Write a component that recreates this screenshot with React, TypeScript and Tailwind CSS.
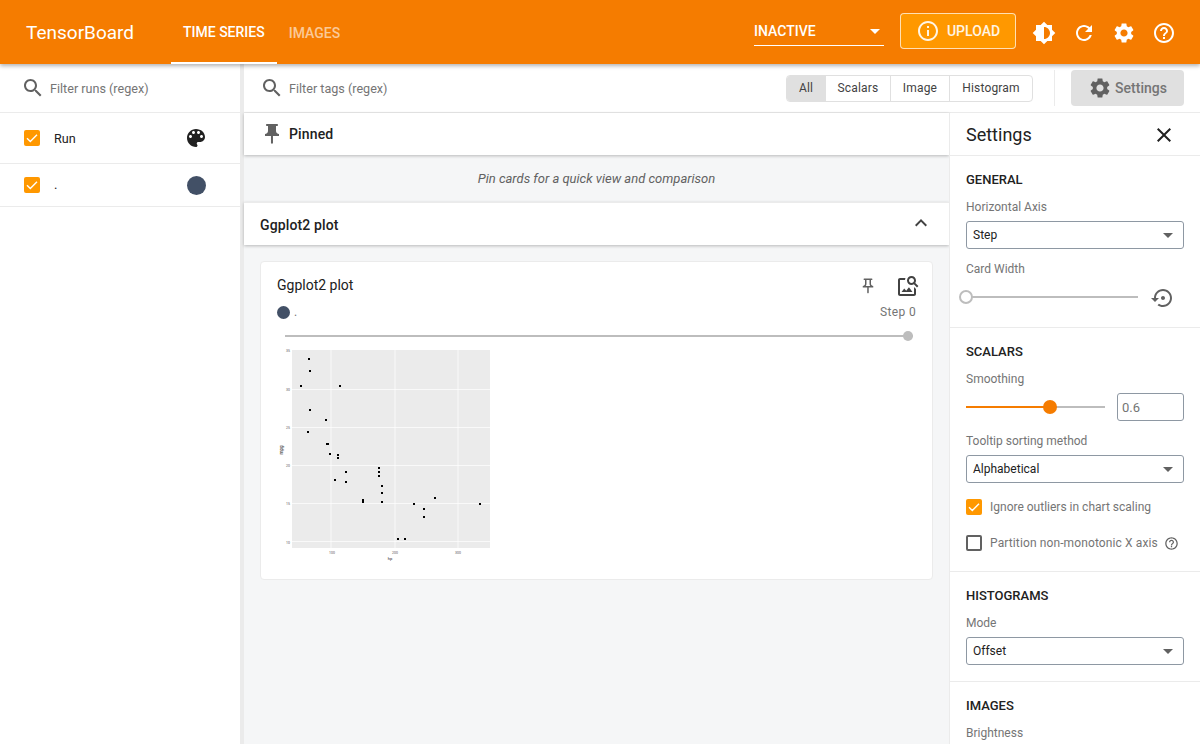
import React from 'react'

/* Material icon paths */
const icons = {
  search: 'M15.5 14h-.79l-.28-.27C15.41 12.59 16 11.11 16 9.5 16 5.91 13.09 3 9.5 3S3 5.91 3 9.5 5.91 16 9.5 16c1.61 0 3.09-.59 4.23-1.57l.27.28v.79l5 4.99L20.49 19l-4.99-5zm-6 0C7.01 14 5 11.99 5 9.5S7.01 5 9.5 5 14 7.01 14 9.5 11.99 14 9.5 14z',
  palette: 'M12 3c-4.97 0-9 4.03-9 9s4.03 9 9 9c.83 0 1.5-.67 1.5-1.5 0-.39-.15-.74-.39-1.01-.23-.26-.38-.61-.38-.99 0-.83.67-1.5 1.5-1.5H16c2.76 0 5-2.24 5-5 0-4.42-4.03-8-9-8zm-5.5 9c-.83 0-1.5-.67-1.5-1.5S5.67 9 6.5 9 8 9.67 8 10.5 7.33 12 6.5 12zm3-4C8.67 8 8 7.33 8 6.5S8.67 5 9.5 5s1.5.67 1.5 1.5S10.33 8 9.5 8zm5 0c-.83 0-1.5-.67-1.5-1.5S13.67 5 14.5 5s1.5.67 1.5 1.5S15.33 8 14.5 8zm3 4c-.83 0-1.5-.67-1.5-1.5S16.67 9 17.5 9s1.5.67 1.5 1.5-.67 1.5-1.5 1.5z',
  brightness: 'M20 15.31L23.31 12 20 8.69V4h-4.69L12 .69 8.69 4H4v4.69L.69 12 4 15.31V20h4.69L12 23.31 15.31 20H20v-4.69zM12 18V6c3.31 0 6 2.69 6 6s-2.69 6-6 6z',
  refresh: 'M17.65 6.35C16.2 4.9 14.21 4 12 4c-4.42 0-7.99 3.58-7.99 8s3.57 8 7.99 8c3.73 0 6.84-2.55 7.73-6h-2.08c-.82 2.33-3.04 4-5.65 4-3.31 0-6-2.69-6-6s2.69-6 6-6c1.66 0 3.14.69 4.22 1.78L13 11h7V4l-2.35 2.35z',
  settings: 'M19.14 12.94c.04-.3.06-.61.06-.94 0-.32-.02-.64-.07-.94l2.03-1.58c.18-.14.23-.41.12-.61l-1.92-3.32c-.12-.22-.37-.29-.59-.22l-2.39.96c-.5-.38-1.03-.7-1.62-.94l-.36-2.54c-.04-.24-.24-.41-.48-.41h-3.84c-.24 0-.43.17-.47.41l-.36 2.54c-.59.24-1.13.57-1.62.94l-2.39-.96c-.22-.08-.47 0-.59.22L2.74 8.87c-.12.21-.08.47.12.61l2.03 1.58c-.05.3-.09.63-.09.94s.02.64.07.94l-2.03 1.58c-.18.14-.23.41-.12.61l1.92 3.32c.12.22.37.29.59.22l2.39-.96c.5.38 1.03.7 1.62.94l.36 2.54c.05.24.24.41.48.41h3.84c.24 0 .44-.17.47-.41l.36-2.54c.59-.24 1.13-.56 1.62-.94l2.39.96c.22.08.47 0 .59-.22l1.92-3.32c.12-.22.07-.47-.12-.61l-2.01-1.58zM12 15.6c-1.98 0-3.6-1.62-3.6-3.6s1.62-3.6 3.6-3.6 3.6 1.62 3.6 3.6-1.62 3.6-3.6 3.6z',
  help: 'M11 18h2v-2h-2v2zm1-16C6.48 2 2 6.48 2 12s4.48 10 10 10 10-4.48 10-10S17.52 2 12 2zm0 18c-4.41 0-8-3.59-8-8s3.59-8 8-8 8 3.59 8 8-3.59 8-8 8zm0-14c-2.21 0-4 1.79-4 4h2c0-1.1.9-2 2-2s2 .9 2 2c0 2-3 1.75-3 5h2c0-2.25 3-2.5 3-5 0-2.21-1.79-4-4-4z',
  info: 'M11 7h2v2h-2zm0 4h2v6h-2zm1-9C6.48 2 2 6.48 2 12s4.48 10 10 10 10-4.48 10-10S17.52 2 12 2zm0 18c-4.41 0-8-3.59-8-8s3.59-8 8-8 8 3.59 8 8-3.59 8-8 8z',
  pin: 'M16 9V4h1c.55 0 1-.45 1-1s-.45-1-1-1H7c-.55 0-1 .45-1 1s.45 1 1 1h1v5c0 1.66-1.34 3-3 3v2h5.97v7l1 1 1-1v-7H19v-2c-1.66 0-3-1.34-3-3z',
  pinOutline: 'M14 4v5c0 1.12.37 2.16 1 3H9c.65-.86 1-1.9 1-3V4h4m3-2H7c-.55 0-1 .45-1 1s.45 1 1 1h1v5c0 1.66-1.34 3-3 3v2h5.97v7l1 1 1-1v-7H19v-2c-1.66 0-3-1.34-3-3V4h1c.55 0 1-.45 1-1s-.45-1-1-1z',
  close: 'M19 6.41L17.59 5 12 10.59 6.41 5 5 6.41 10.59 12 5 17.59 6.41 19 12 13.41 17.59 19 19 17.59 13.41 12z',
  expandLess: 'M12 8l-6 6 1.41 1.41L12 10.83l4.59 4.58L18 14z',
  restore: 'M14 12c0-1.1-.9-2-2-2s-2 .9-2 2 .9 2 2 2 2-.9 2-2zm-2-9c-4.97 0-9 4.03-9 9H0l4 4 4-4H5c0-3.87 3.13-7 7-7s7 3.13 7 7-3.13 7-7 7c-1.51 0-2.91-.49-4.06-1.3l-1.42 1.44C8.04 20.3 9.94 21 12 21c4.97 0 9-4.03 9-9s-4.03-9-9-9z',
  imageSearch: 'M18 13v7H4V6h5.02c.05-.71.22-1.38.48-2H4c-1.1 0-2 .9-2 2v14c0 1.1.9 2 2 2h14c1.1 0 2-.9 2-2v-5l-2-2zm-1.5 5h-11l2.75-3.53 1.96 2.36 2.75-3.54L16.5 18zm2.8-9.11c.44-.7.7-1.51.7-2.39C20 4.01 17.99 2 15.5 2S11 4.01 11 6.5s2.01 4.5 4.49 4.5c.88 0 1.7-.26 2.39-.7L21 13.42 22.42 12 19.3 8.89zM15.5 9C14.12 9 13 7.88 13 6.5S14.12 4 15.5 4 18 5.12 18 6.5 16.88 9 15.5 9z',
}

function Icon({ d, className }: { d: string; className?: string }) {
  return (
    <svg viewBox="0 0 24 24" fill="currentColor" className={`shrink-0 ${className ?? 'h-6 w-6'}`}>
      <path d={d} />
    </svg>
  )
}

function Checkbox({ checked = true }: { checked?: boolean }) {
  if (!checked) return <span className="block h-4 w-4 shrink-0 rounded-[2px] border-2 border-[#616161]" />
  return (
    <span className="flex h-4 w-4 shrink-0 items-center justify-center rounded-[2px] bg-[#ff9800]">
      <svg viewBox="0 0 16 16" className="h-4 w-4" fill="none" stroke="#fff" strokeWidth="1.4">
        <path d="M3 8.3l3.3 3.2L13 4.8" />
      </svg>
    </span>
  )
}

function Select({ value }: { value: string }) {
  return (
    <div className="flex h-7 items-center justify-between rounded-[3px] border border-[#8e98a3] pl-[6px] pr-[10px] text-xs text-[#212121]">
      <span>{value}</span>
      <span className="h-0 w-0 border-x-[5px] border-t-[5px] border-x-transparent border-t-[#616161]" />
    </div>
  )
}

function Label({ children, className }: { children: React.ReactNode; className?: string }) {
  return <div className={`h-4 text-xs leading-[18px] text-[#757575] ${className ?? ''}`}>{children}</div>
}

function SectionTitle({ children }: { children: React.ReactNode }) {
  return <div className="h-4 text-[13px] font-medium leading-4 text-[#212121]">{children}</div>
}

/* ─── mtcars scatter, drawn in the crop's own coordinates ─── */
const points = [
  [49, 19], [50, 31], [41, 46], [80, 46], [50, 70], [66, 80], [48, 92], [67, 104], [68, 104], [70, 114],
  [78, 115], [78, 118], [86, 132], [75, 140], [86, 142], [119, 128], [119, 132], [119, 136], [122, 146],
  [122, 153], [122, 162], [103, 160], [103, 162], [154, 164], [164, 169], [164, 177], [175, 158],
  [220, 164], [138, 199], [145, 199],
]

function Plot() {
  return (
    <svg viewBox="17 5 216 220" className="mt-2 block h-[220px] w-[216px]">
      <rect x="32" y="10" width="198" height="198" fill="#ebebeb" />
      {[30, 68, 106, 144, 182].map((y) => (
        <line key={y} x1="32" x2="230" y1={y + 19.5} y2={y + 19.5} stroke="#fff" strokeWidth="0.7" />
      ))}
      {[71, 135, 198].map((x) => (
        <line key={x} x1={x} x2={x} y1="10" y2="208" stroke="#fff" strokeWidth="0.7" />
      ))}
      {points.map(([x, y], i) => (
        <rect key={i} x={x - 1} y={y - 1} width="2" height="2" fill="#000" />
      ))}
      <g fontFamily="Roboto, sans-serif" fontSize="3.5" fill="#555" textAnchor="end">
        <text x="30" y="12">35</text>
        <text x="30" y="51">30</text>
        <text x="30" y="89">25</text>
        <text x="30" y="127">20</text>
        <text x="30" y="165">15</text>
        <text x="30" y="204">10</text>
      </g>
      <g fontFamily="Roboto, sans-serif" fontSize="3.5" fill="#555" textAnchor="middle">
        <text x="72" y="213.5">100</text>
        <text x="135" y="213.5">200</text>
        <text x="198" y="213.5">300</text>
      </g>
      <text x="130" y="219.5" fontFamily="Roboto, sans-serif" fontSize="4" fill="#222" textAnchor="middle">hp</text>
      <text x="0" y="0" fontFamily="Roboto, sans-serif" fontSize="4.5" fill="#111" textAnchor="middle" transform="translate(23 110) rotate(-90)">mpg</text>
    </svg>
  )
}

function Toolbar() {
  return (
    <header className="relative z-20 flex h-16 shrink-0 items-center bg-[#f57c00] text-white shadow-[0_2px_4px_rgba(0,0,0,0.3)]">
      <div className="mt-[2px] w-[171px] pl-[26px] text-[19px]">TensorBoard</div>
      <nav className="flex h-full items-center text-sm font-medium">
        <div className="flex h-full items-center border-b-2 border-white px-3 pt-[2px]">TIME SERIES</div>
        <div className="flex h-full items-center px-3 pt-[2px] text-white/60">IMAGES</div>
      </nav>
      <div className="ml-auto mr-4 mt-[2px] flex w-[130px] items-center justify-between border-b border-white pb-[3px] pr-[4px] text-sm font-medium leading-[22px]">
        <span>INACTIVE</span>
        <span className="mt-[1px] h-0 w-0 border-x-[5px] border-t-[5px] border-x-transparent border-t-white" />
      </div>
      <div className="mb-[2px] flex h-9 w-[116px] items-center justify-center gap-[7px] rounded-[4px] border border-white/70 bg-[#ff9800] text-sm font-medium text-white/90">
        <Icon d={icons.info} />
        UPLOAD
      </div>
      <div className="ml-2 mr-4 mt-[2px] flex">
        {[icons.brightness, icons.refresh, icons.settings, icons.help].map((d) => (
          <div key={d} className="flex h-10 w-10 items-center justify-center">
            <Icon d={d} />
          </div>
        ))}
      </div>
    </header>
  )
}

function RunsSidebar() {
  return (
    <aside className="w-[244px] shrink-0 border-r-4 border-[#ebebeb] bg-white text-xs text-[#212121]">
      <div className="flex h-[49px] items-center border-b border-[#ebebeb] pl-[21px] text-[12.6px] text-[#757575]">
        <Icon d={icons.search} className="h-6 w-6 text-[#616161]" />
        <span className="ml-[5px] pt-[2px]">Filter runs (regex)</span>
      </div>
      <div className="flex h-[51px] items-center border-b border-[#ebebeb] pl-6">
        <Checkbox />
        <span className="ml-[14px] w-[130px] pt-[2px] text-[12.6px]">Run</span>
        <Icon d={icons.palette} className="h-6 w-6 text-[#212121]" />
      </div>
      <div className="flex h-[43px] items-center border-b border-[#ebebeb] pl-6">
        <Checkbox />
        <span className="ml-[14px] w-[133px] text-[13px]">.</span>
        <span className="h-[19px] w-[19px] rounded-full bg-[#425066]" />
      </div>
    </aside>
  )
}

function FilterBar() {
  const tabs = [
    { label: 'All', w: 'w-[39px]', active: true },
    { label: 'Scalars', w: 'w-[65px]', active: false },
    { label: 'Image', w: 'w-[59px]', active: false },
    { label: 'Histogram', w: 'w-[82px]', active: false },
  ]
  return (
    <div className="flex h-[49px] shrink-0 items-center border-b border-[#ebebeb] bg-white pl-[16px] pr-4">
      <Icon d={icons.search} className="h-6 w-6 text-[#616161]" />
      <span className="ml-[5px] pt-[2px] text-[12.6px] text-[#757575]">Filter tags (regex)</span>
      <div className="ml-auto flex h-[27px] overflow-hidden rounded-[4px] border border-[#e0e0e0] text-xs tracking-[0.015em] text-[#424242]">
        {tabs.map((t) => (
          <div
            key={t.label}
            className={`flex items-center justify-center border-r border-[#e0e0e0] last:border-r-0 ${t.w} ${t.active ? 'bg-[#e0e0e0]' : ''}`}
          >
            {t.label}
          </div>
        ))}
      </div>
      <div className="ml-[21px] h-9 w-px bg-[#ebebeb]" />
      <div className="ml-4 flex h-9 w-[113px] items-center justify-center gap-[3px] rounded-[4px] bg-[#e0e0e0] text-sm font-medium text-[#757575]">
        <Icon d={icons.settings} className="h-6 w-6 text-[#616161]" />
        Settings
      </div>
    </div>
  )
}

function MainPane() {
  return (
    <main className="min-w-0 flex-1 bg-[#f5f6f7]">
      <div className="flex h-[42px] items-center bg-white pl-4 text-sm font-medium tracking-[0.01em] text-[#212121] shadow-[0_1px_3px_rgba(0,0,0,0.25)]">
        <Icon d={icons.pin} className="h-6 w-6 text-[#616161]" />
        <span className="ml-[5px]">Pinned</span>
      </div>
      <div className="flex h-[47px] items-center justify-center text-[13px] italic text-[#616161]">
        Pin cards for a quick view and comparison
      </div>
      <div className="flex h-[43px] items-center justify-between border-t border-[#ebebeb] bg-white pl-4 pr-4 pt-[2px] text-sm font-medium tracking-[0.01em] text-[#212121] shadow-[0_1px_3px_rgba(0,0,0,0.25)]">
        <span>Ggplot2 plot</span>
        <Icon d={icons.expandLess} className="mb-1 h-6 w-6 text-[#424242]" />
      </div>
      <section className="mx-4 mt-4 h-[319px] rounded-[4px] border border-[#ebebeb] bg-white px-4 pt-3">
        <div className="flex h-6 items-center text-sm leading-[22px] text-[#212121]">
          <span className="mb-[2px]">Ggplot2 plot</span>
          <Icon d={icons.pinOutline} className="ml-auto h-[18px] w-[18px] text-[#616161]" />
          <Icon d={icons.imageSearch} className="ml-[19px] mr-[-4px] h-6 w-6 text-[#424242]" />
        </div>
        <div className="mt-[4px] flex h-[20px] items-center text-xs text-[#757575]">
          <span className="h-[13px] w-[13px] rounded-full bg-[#425066]" />
          <span className="ml-[4px]">.</span>
          <span className="ml-auto tracking-[0.03em]">Step 0</span>
        </div>
        <div className="relative ml-2 mr-[3px] mt-[13px] h-[2px] bg-[#bdbdbd]">
          <span className="absolute right-0 top-[-4px] h-[10px] w-[10px] rounded-full bg-[#bdbdbd]" />
        </div>
        <Plot />
      </section>
    </main>
  )
}

function SettingsPane() {
  return (
    <aside className="h-full w-[251px] shrink-0 overflow-hidden border-l border-[#ebebeb] bg-white">
      <div className="flex h-[43px] items-center justify-between border-b border-[#ebebeb] pl-4 pr-6 pt-[1px] text-lg text-[#212121]">
        <span>Settings</span>
        <Icon d={icons.close} className="h-6 w-6 text-[#212121]" />
      </div>

      <section className="h-[172px] border-b border-[#ebebeb] px-4 pt-4">
        <SectionTitle>GENERAL</SectionTitle>
        <Label className="mt-[10px]">Horizontal Axis</Label>
        <div className="mt-[7px]"><Select value="Step" /></div>
        <Label className="mt-[11px]">Card Width</Label>
        <div className="mt-[9px] flex h-6 items-center">
          <div className="relative h-[2px] w-[172px] bg-[#bdbdbd]">
            <span className="absolute left-[-7px] top-[-6px] h-[14px] w-[14px] rounded-full border-2 border-[#bdbdbd] bg-white" />
          </div>
          <Icon d={icons.restore} className="ml-[13px] mt-[1px] h-6 w-6 text-[#616161]" />
        </div>
      </section>

      <section className="h-[244px] border-b border-[#ebebeb] px-4 pt-4">
        <SectionTitle>SCALARS</SectionTitle>
        <Label className="mt-[10px]">Smoothing</Label>
        <div className="mt-[7px] flex h-7 items-center justify-between">
          <div className="relative h-[2px] w-[139px] bg-[#bdbdbd]">
            <div className="h-full w-[84px] bg-[#f57c00]" />
            <span className="absolute left-[77px] top-[-6px] h-[14px] w-[14px] rounded-full bg-[#f57c00]" />
          </div>
          <div className="flex h-7 w-[67px] items-center rounded-[3px] border border-[#8e98a3] pl-1 pt-[1px] text-[13px] text-[#757575]">0.6</div>
        </div>
        <Label className="mt-[11px]">Tooltip sorting method</Label>
        <div className="mt-[7px]"><Select value="Alphabetical" /></div>
        <div className="mt-4 flex h-4 items-center gap-2">
          <Checkbox />
          <span className="text-xs text-[#757575]">Ignore outliers in chart scaling</span>
        </div>
        <div className="mt-5 flex h-4 items-center gap-2">
          <Checkbox checked={false} />
          <span className="text-xs tracking-[0.01em] text-[#757575]">Partition non-monotonic X axis</span>
          <Icon d={icons.help} className="ml-[-2px] h-[15px] w-[15px] text-[#616161]" />
        </div>
      </section>

      <section className="h-[110px] border-b border-[#ebebeb] px-4 pt-4">
        <SectionTitle>HISTOGRAMS</SectionTitle>
        <Label className="mt-[10px]">Mode</Label>
        <div className="mt-[7px]"><Select value="Offset" /></div>
      </section>

      <section className="px-4 pt-4">
        <SectionTitle>IMAGES</SectionTitle>
        <Label className="mt-[10px]">Brightness</Label>
      </section>
    </aside>
  )
}

export default function App() {
  return (
    <div className="flex h-[744px] w-[1200px] flex-col overflow-hidden bg-white [font-family:Roboto,sans-serif]">
      <Toolbar />
      <div className="flex min-h-0 flex-1">
        <RunsSidebar />
        <div className="flex min-w-0 flex-1 flex-col">
          <FilterBar />
          <div className="flex min-h-0 flex-1">
            <MainPane />
            <SettingsPane />
          </div>
        </div>
      </div>
    </div>
  )
}
